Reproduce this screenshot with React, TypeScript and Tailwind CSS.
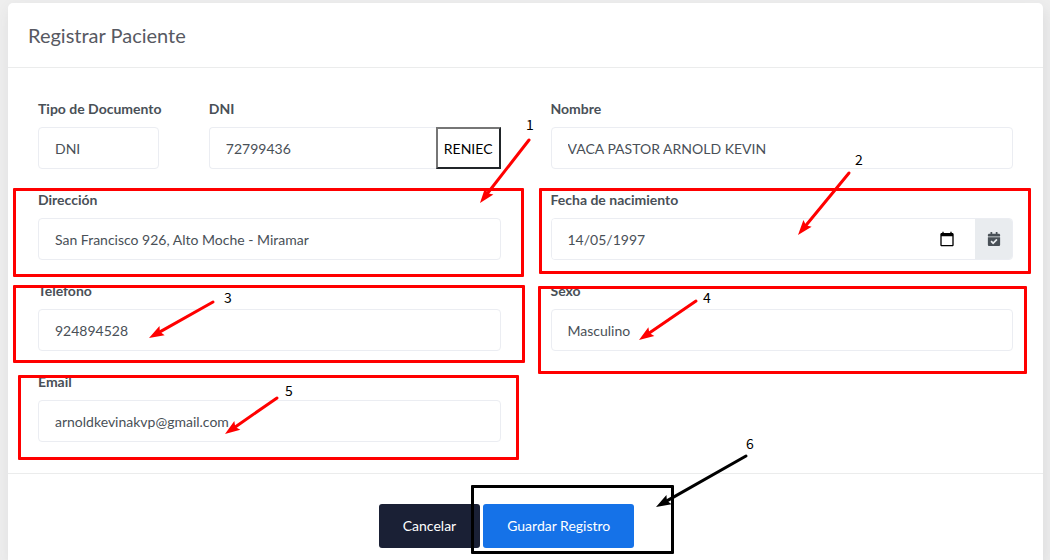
import type { ReactNode } from "react";
import { FaCalendarCheck } from "react-icons/fa";
import { MdCalendarToday } from "react-icons/md";

const control =
  "h-[42px] w-full min-w-0 appearance-none rounded border border-[#ebedf2] bg-white px-4 text-sm text-[#495057] outline-none focus:border-[#3e93ff]";

function Field({ id, label, span, children }: { id: string; label: string; span: string; children: ReactNode }) {
  return (
    <div className={span}>
      <label htmlFor={id} className="mb-2 block text-sm leading-5 font-bold whitespace-nowrap text-[#495057]">
        {label}
      </label>
      {children}
    </div>
  );
}

type Arrow = { from: [number, number]; to: [number, number]; color: string };

const arrows: Arrow[] = [
  { from: [529, 140], to: [480, 203], color: "#ff0000" },
  { from: [849, 173], to: [798, 235], color: "#ff0000" },
  { from: [213, 302], to: [149, 338], color: "#ff0000" },
  { from: [696, 301], to: [639, 340], color: "#ff0000" },
  { from: [277, 398], to: [225, 434], color: "#ff0000" },
  { from: [746, 456], to: [656, 507], color: "#000000" },
];

function ArrowShape({ from, to, color }: Arrow) {
  const dx = to[0] - from[0];
  const dy = to[1] - from[1];
  const length = Math.hypot(dx, dy);
  const angle = (Math.atan2(dy, dx) * 180) / Math.PI;
  return (
    <g transform={`translate(${from[0]} ${from[1]}) rotate(${angle})`} fill={color} stroke={color}>
      <line x1="0" y1="0" x2={length - 12} y2="0" strokeWidth="3" strokeLinecap="round" />
      <path d={`M${length} 0 L${length - 15} -5.3 L${length - 12.5} 0 L${length - 15} 5.3 Z`} stroke="none" />
    </g>
  );
}

function Annotations() {
  const box = "absolute rounded-[1px] border-3";
  const number = "absolute text-sm leading-4";
  return (
    <div className="pointer-events-none absolute inset-0 overflow-hidden font-['Noto_Sans_CJK_SC',sans-serif] text-black">
      <div className={`${box} top-[188px] left-[13px] h-[89px] w-[511px] border-[#ff0000]`} />
      <div className={`${box} top-[188px] left-[539px] h-[86px] w-[492px] border-[#ff0000]`} />
      <div className={`${box} top-[285px] left-[13px] h-[78px] w-[512px] border-[#ff0000]`} />
      <div className={`${box} top-[286px] left-[538px] h-[88px] w-[489px] border-[#ff0000]`} />
      <div className={`${box} top-[375px] left-[18px] h-[85px] w-[501px] border-[#ff0000]`} />
      <div className={`${box} top-[485px] left-[471px] h-[69px] w-[203px] border-black`} />
      <svg className="absolute inset-0 h-full w-full" aria-hidden="true">
        {arrows.map((arrow) => (
          <ArrowShape key={arrow.from.join()} {...arrow} />
        ))}
      </svg>
      <span className={`${number} top-[116px] left-[526px]`}>1</span>
      <span className={`${number} top-[151px] left-[855px]`}>2</span>
      <span className={`${number} top-[289px] left-[224px]`}>3</span>
      <span className={`${number} top-[289px] left-[703px]`}>4</span>
      <span className={`${number} top-[382px] left-[285px]`}>5</span>
      <span className={`${number} top-[435px] left-[746px]`}>6</span>
    </div>
  );
}

export default function App() {
  return (
    <div className="relative flex min-h-screen flex-col bg-[#eeeeee] pt-[3px] pr-[7px] pl-2 font-['Lato',sans-serif] text-sm text-[#575962]">
      <form
        className="flex flex-1 flex-col rounded-t-[5px] bg-white shadow-[2px_6px_15px_0_rgba(69,65,78,0.1)]"
        onSubmit={(event) => event.preventDefault()}
      >
        <header className="border-b border-[#ebecec] px-5 pt-4 pb-4">
          <h1 className="text-xl leading-8">Registrar Paciente</h1>
        </header>

        <div className="grid grid-cols-12 gap-x-[50px] gap-y-[21px] px-[30px] pt-[31px] pb-[31px]">
          <Field id="tipo" label="Tipo de Documento" span="col-span-2">
            <select id="tipo" className={`${control} pt-px`} defaultValue="DNI">
              <option>DNI</option>
            </select>
          </Field>
          <Field id="dni" label="DNI" span="col-span-4">
            <div className="flex">
              <input id="dni" className={`${control} flex-1 rounded-r-none border-r-0`} defaultValue="72799436" />
              <button
                type="button"
                className="border-2 border-t-[#767676] border-r-[#212529] border-b-[#212529] border-l-[#767676] bg-white px-[6px] pt-px text-sm text-black"
              >
                RENIEC
              </button>
            </div>
          </Field>
          <Field id="nombre" label="Nombre" span="col-span-6">
            <input id="nombre" className={control} defaultValue="VACA PASTOR ARNOLD KEVIN" />
          </Field>

          <Field id="direccion" label="Dirección" span="col-span-6">
            <input id="direccion" className={control} defaultValue="San Francisco 926, Alto Moche - Miramar" />
          </Field>
          <Field id="fecha" label="Fecha de nacimiento" span="col-span-6">
            <div className="flex h-[42px] overflow-hidden rounded border border-[#ebedf2]">
              <input
                id="fecha"
                className="min-w-0 flex-1 bg-white px-4 pt-px text-sm text-[#495057] outline-none"
                defaultValue="14/05/1997"
              />
              <button type="button" aria-label="Abrir calendario" className="pr-5 text-black">
                <MdCalendarToday size={16} />
              </button>
              <span className="flex w-[37px] items-center justify-center bg-[#e9ecef] text-[#495057]">
                <FaCalendarCheck size={14} />
              </span>
            </div>
          </Field>

          <Field id="telefono" label="Teléfono" span="col-span-6">
            <input id="telefono" className={control} defaultValue="924894528" />
          </Field>
          <Field id="sexo" label="Sexo" span="col-span-6">
            <select id="sexo" className={`${control} pt-px`} defaultValue="Masculino">
              <option>Masculino</option>
              <option>Femenino</option>
            </select>
          </Field>

          <Field id="email" label="Email" span="col-span-6">
            <input id="email" type="email" className={control} defaultValue="arnoldkevinakvp@gmail.com" />
          </Field>
        </div>

        <footer className="flex justify-center gap-[3px] border-t border-[#ebecec] pt-[30px] pr-[38px] pb-3">
          <button type="button" className="h-11 rounded-[3px] bg-[#1a2035] px-6 text-sm text-white">
            Cancelar
          </button>
          <button type="submit" className="h-11 rounded-[3px] bg-[#1572e8] px-6 text-sm text-white">
            Guardar Registro
          </button>
        </footer>
      </form>
      <Annotations />
    </div>
  );
}
